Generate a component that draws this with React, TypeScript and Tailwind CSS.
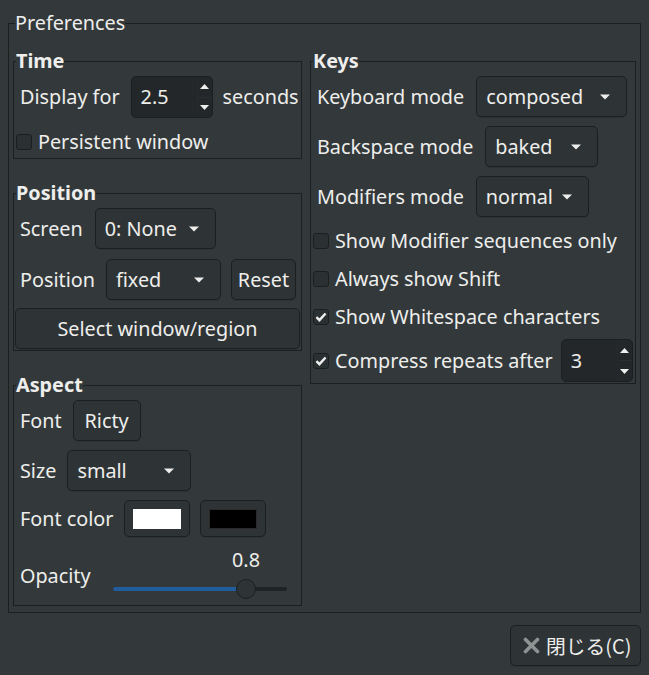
import React from "react";

function Caret() {
  return (
    <svg width="10" height="6" viewBox="0 0 10 6" className="shrink-0">
      <path d="M0 0.5h10L5 5.5z" fill="#eeeeec" />
    </svg>
  );
}

function Btn({ children, className = "" }: { children: React.ReactNode; className?: string }) {
  return (
    <div
      className={`flex shrink-0 items-center rounded-[5px] border border-[#1b1f20] bg-[#2e3436] shadow-[0_1px_rgba(0,0,0,0.1)] ${className}`}
    >
      {children}
    </div>
  );
}

function Combo({ value, width }: { value: string; width: string }) {
  return (
    <Btn className={`h-[41px] justify-between pl-[9px] pr-[16px] ${width}`}>
      <span>{value}</span>
      <Caret />
    </Btn>
  );
}

function Spin({ value, width, height }: { value: string; width: string; height: string }) {
  return (
    <div className={`flex shrink-0 rounded-[5px] border border-[#1b1f20] bg-[#232729] ${width} ${height}`}>
      <span className="flex flex-1 items-center pl-[9px]">{value}</span>
      <div className="flex w-[15px] flex-col border-l border-[#262a2c]">
        <div className="flex flex-1 items-center justify-center border-b border-[#2a2e30]">
          <svg width="9" height="5" viewBox="0 0 9 5">
            <path d="M0 5h9L4.5 0z" fill="#eeeeec" />
          </svg>
        </div>
        <div className="flex flex-1 items-center justify-center">
          <svg width="9" height="5" viewBox="0 0 9 5">
            <path d="M0 0h9L4.5 5z" fill="#eeeeec" />
          </svg>
        </div>
      </div>
    </div>
  );
}

function Check({ checked = false }: { checked?: boolean }) {
  return (
    <span className="flex h-[16px] w-[16px] shrink-0 items-center justify-center rounded-[3px] border border-[#1b1f20] bg-[#2b3032]">
      {checked && (
        <svg viewBox="0 0 16 16" className="h-[16px] w-[16px]">
          <path d="M2.8 8.2l3.4 3.4 7-7.6" stroke="#eeeeec" strokeWidth="2.8" fill="none" />
        </svg>
      )}
    </span>
  );
}

function Frame({ title, children }: { title: string; children: React.ReactNode }) {
  return (
    <fieldset className="min-w-0 border border-[#1b1f20]">
      <legend className="ml-[2px] font-bold leading-[24px]">{title}</legend>
      {children}
    </fieldset>
  );
}

function CheckRow({ label, checked = false }: { label: string; checked?: boolean }) {
  return (
    <div className="flex h-[38px] items-center gap-[6px] pl-[2px]">
      <Check checked={checked} />
      <span>{label}</span>
    </div>
  );
}

export default function App() {
  return (
    <div className="flex h-[675px] w-[649px] flex-col bg-[#33393b] pl-[8px] pr-[8px] pt-[11px] font-['Noto_Sans','Noto_Sans_CJK_JP',sans-serif] text-[19.8px] leading-[24px] text-[#eeeeec]">
      <fieldset className="w-[633px] min-w-0 border border-[#1b1f20] px-[4px] pb-[6px] pt-[14px]">
        <legend className="ml-[2px] leading-[24px]">Preferences</legend>
        <div className="flex items-start gap-[8px]">
          {/* left column */}
          <div className="flex w-[289px] flex-col gap-[22px]">
            <Frame title="Time">
              <div className="flex flex-col pb-[1px] pt-[3px]">
                <div className="flex h-[42px] items-center gap-[10px] pl-[6px]">
                  <span className="mr-[1px]">Display for</span>
                  <Spin value="2.5" width="w-[82px]" height="h-[42px]" />
                  <span>seconds</span>
                </div>
                <div className="mt-[9px] flex h-[30px] items-center gap-[6px] pl-[2px]">
                  <Check />
                  <span>Persistent window</span>
                </div>
              </div>
            </Frame>

            <Frame title="Position">
              <div className="flex flex-col pb-[1px] pt-[3px]">
                <div className="flex h-[41px] items-center gap-[12px] pl-[6px]">
                  <span>Screen</span>
                  <Combo value="0: None" width="w-[121px]" />
                </div>
                <div className="mt-[10px] flex h-[41px] items-center pl-[6px]">
                  <span className="mr-[11px]">Position</span>
                  <Combo value="fixed" width="w-[115px]" />
                  <Btn className="ml-[10px] h-[41px] w-[65px] justify-center">Reset</Btn>
                </div>
                <Btn className="mx-[1px] mt-[8px] h-[41px] justify-center">Select window/region</Btn>
              </div>
            </Frame>

            <Frame title="Aspect">
              <div className="flex flex-col pb-[6px] pt-[3px]">
                <div className="flex h-[41px] items-center gap-[11px] pl-[6px]">
                  <span>Font</span>
                  <Btn className="h-[41px] w-[68px] justify-center">Ricty</Btn>
                </div>
                <div className="mt-[9px] flex h-[41px] items-center gap-[11px] pl-[6px]">
                  <span>Size</span>
                  <Combo value="small" width="w-[124px]" />
                </div>
                <div className="mt-[9px] flex h-[37px] items-center gap-[10px] pl-[6px]">
                  <span className="mr-[1px]">Font color</span>
                  <Btn className="h-[37px] w-[66px] justify-center">
                    <span className="h-[20px] w-[48px] bg-white" />
                  </Btn>
                  <Btn className="h-[37px] w-[66px] justify-center">
                    <span className="h-[20px] w-[48px] border border-[#2a2a2a] bg-black" />
                  </Btn>
                </div>
                <div className="mt-[11px] flex items-start pl-[6px] pr-[14px]">
                  <span className="mt-[16px]">Opacity</span>
                  <div className="ml-auto flex w-[174px] flex-col">
                    <span className="ml-[118px] w-[30px] text-center">0.8</span>
                    <div className="relative mt-[7px] h-[20px]">
                      <div className="absolute left-0 right-0 top-[8px] h-[4px] rounded-full bg-[#1f2325]" />
                      <div className="absolute left-0 top-[8px] h-[4px] w-[130px] rounded-full bg-[#215d9c]" />
                      <div className="absolute left-[123px] top-0 h-[20px] w-[20px] rounded-full border border-[#1b1f20] bg-[#2e3436]" />
                    </div>
                  </div>
                </div>
              </div>
            </Frame>
          </div>

          {/* right column */}
          <div className="flex w-[326px] flex-col">
            <Frame title="Keys">
              <div className="flex flex-col pb-[1px] pt-[3px]">
                <div className="flex h-[41px] items-center gap-[12px] pl-[6px]">
                  <span>Keyboard mode</span>
                  <Combo value="composed" width="w-[151px]" />
                </div>
                <div className="mt-[9px] flex h-[41px] items-center gap-[12px] pl-[6px]">
                  <span>Backspace mode</span>
                  <Combo value="baked" width="w-[113px]" />
                </div>
                <div className="mt-[9px] flex h-[41px] items-center gap-[12px] pl-[6px]">
                  <span>Modifiers mode</span>
                  <Combo value="normal" width="w-[113px]" />
                </div>
                <div className="mt-[5px] flex flex-col">
                  <CheckRow label="Show Modifier sequences only" />
                  <CheckRow label="Always show Shift" />
                  <CheckRow label="Show Whitespace characters" checked />
                </div>
                <div className="mt-[3px] flex h-[43px] items-center pl-[2px]">
                  <Check checked />
                  <span className="ml-[6px] mr-[8px]">Compress repeats after</span>
                  <Spin value="3" width="w-[72px]" height="h-[43px]" />
                </div>
              </div>
            </Frame>
          </div>
        </div>
      </fieldset>

      <div className="mt-[12px] flex justify-end">
        <Btn className="h-[41px] w-[131px] gap-[6px] pl-[12px]">
          <svg width="17" height="17" viewBox="0 0 17 17">
            <path d="M2.5 2.5l12 12M14.5 2.5l-12 12" stroke="#8f9292" strokeWidth="3.6" strokeLinecap="round" />
          </svg>
          <span className="font-['Noto_Sans_CJK_JP',sans-serif]">閉じる(C)</span>
        </Btn>
      </div>
    </div>
  );
}
